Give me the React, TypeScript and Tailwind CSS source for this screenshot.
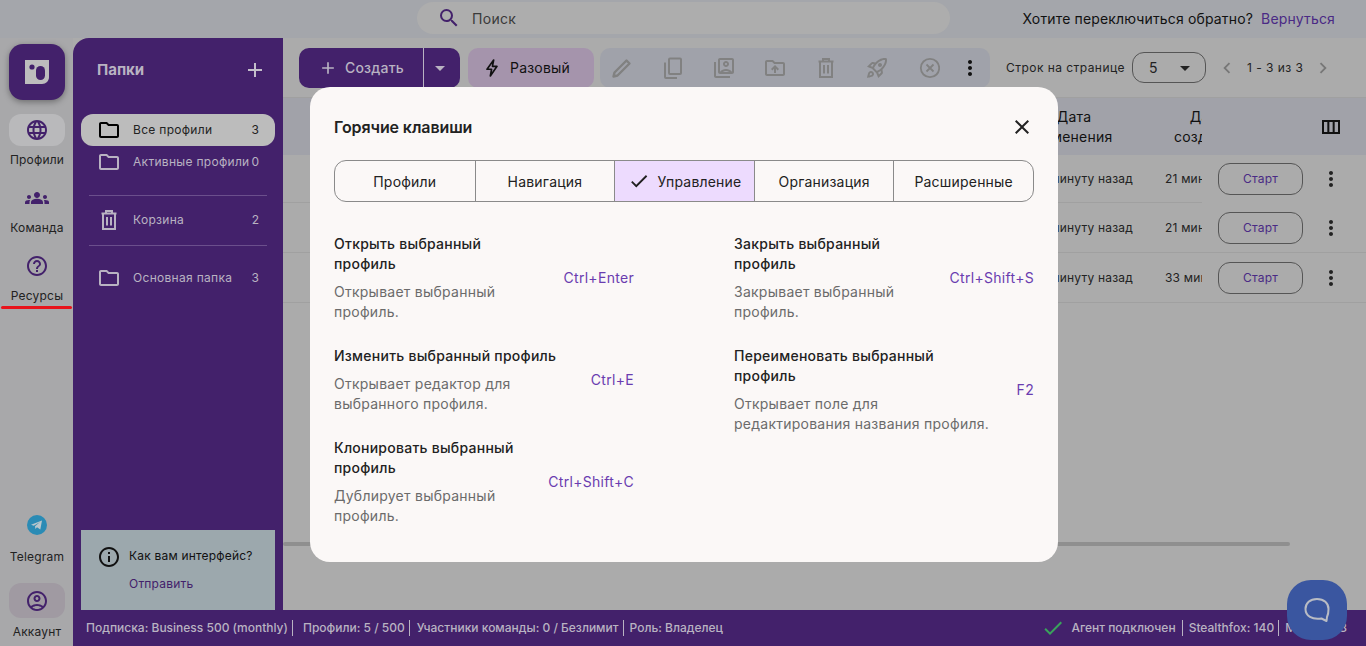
import React from 'react';
import {
  MdAdd, MdArrowDropDown, MdCheck, MdChevronLeft, MdChevronRight, MdClose, MdGroups,
  MdHelpOutline, MdInfoOutline, MdLanguage, MdMoreVert, MdOutlineAccountCircle,
  MdOutlineDriveFolderUpload, MdOutlineFolder,
  MdOutlineRocketLaunch, MdOutlineSwitchAccount, MdOutlineViewColumn, MdSearch,
} from 'react-icons/md';

const tabs = ['Профили', 'Навигация', 'Управление', 'Организация', 'Расширенные'];

const leftKeys = [
  { title: ['Открыть выбранный', 'профиль'], desc: ['Открывает выбранный', 'профиль.'], keys: 'Ctrl+Enter' },
  { title: ['Изменить выбранный профиль'], desc: ['Открывает редактор для', 'выбранного профиля.'], keys: 'Ctrl+E' },
  { title: ['Клонировать выбранный', 'профиль'], desc: ['Дублирует выбранный', 'профиль.'], keys: 'Ctrl+Shift+C' },
];

const rightKeys = [
  { title: ['Закрыть выбранный', 'профиль'], desc: ['Закрывает выбранный', 'профиль.'], keys: 'Ctrl+Shift+S' },
  { title: ['Переименовать выбранный', 'профиль'], desc: ['Открывает поле для', 'редактирования названия профиля.'], keys: 'F2' },
];

const rows = ['21 минуту назад', '21 минуту назад', '33 минуты назад'];

function TrashIcon({ size = 24 }: { size?: number }) {
  return (
    <svg width={size} height={size} viewBox="0 0 24 24" fill="none" stroke="currentColor" strokeWidth="2">
      <path d="M4.5 5.5h15M9 5.5V3h6v2.5M6 5.5V21h12V5.5M10 9v8.5M14 9v8.5" />
    </svg>
  );
}

function CopyIcon() {
  return (
    <svg width="24" height="24" viewBox="0 0 24 24" fill="none" stroke="currentColor" strokeWidth="2">
      <rect x="8" y="2.5" width="12" height="15.5" rx="1" />
      <path d="M4 6.5V21a1 1 0 0 0 1 1h11" />
    </svg>
  );
}

function PencilIcon() {
  return (
    <svg width="24" height="24" viewBox="0 0 24 24" fill="none" stroke="currentColor" strokeWidth="2.4" strokeLinejoin="round">
      <path d="M3.5 20.5 4.5 16.5 16.5 4.5 19.5 7.5 7.5 19.5Z" />
    </svg>
  );
}

function BoltIcon() {
  return (
    <svg width="20" height="20" viewBox="0 0 24 24" fill="none" stroke="currentColor" strokeWidth="2" strokeLinejoin="round">
      <path d="M14 2.5 6 13.5h5.5L10 21.5l8-11.5h-5.5Z" />
    </svg>
  );
}

function CancelIcon() {
  return (
    <svg width="24" height="24" viewBox="0 0 24 24" fill="none" stroke="currentColor" strokeWidth="1.8">
      <circle cx="14" cy="12" r="9.2" />
      <path d="M10.5 8.5l7 7M17.5 8.5l-7 7" />
    </svg>
  );
}

function Lines({ lines }: { lines: string[] }) {
  return (
    <>
      {lines.map((l) => (
        <div key={l}>{l}</div>
      ))}
    </>
  );
}

function KeyColumn({ items }: { items: typeof leftKeys }) {
  return (
    <div className="flex flex-col gap-6">
      {items.map((item) => (
        <div key={item.keys} className="flex items-center justify-between">
          <div className="flex flex-col gap-2 whitespace-nowrap text-[14px] leading-5 tracking-[0.25px]">
            <div className="font-[450] text-[#222]">
              <Lines lines={item.title} />
            </div>
            <div className="text-[#6b6b6b]">
              <Lines lines={item.desc} />
            </div>
          </div>
          <div className="pb-[2px] text-[14px] tracking-[0.3px] text-[#6a3cb0]">{item.keys}</div>
        </div>
      ))}
    </div>
  );
}

function RailItem({ label, active, children }: { label: string; active?: boolean; children: React.ReactNode }) {
  return (
    <div className="flex flex-col items-center">
      <div className={`flex h-8 w-14 items-center justify-center rounded-xl text-[24px] text-[#43216b] ${active ? 'bg-[#b9b9bb]' : ''}`}>
        {children}
      </div>
      <div className="mt-[6px] pl-px text-[12px] leading-4 tracking-[0.2px] text-[#222]">{label}</div>
    </div>
  );
}

function FolderRow({ label, count, active, trash }: { label: string; count: string; active?: boolean; trash?: boolean }) {
  return (
    <div className={`mx-2 flex h-8 items-center rounded-xl pl-4 pr-4 ${active ? 'bg-[#bcbcbc] text-[#222]' : 'text-[#b9b3c2]'}`}>
      {trash ? <TrashIcon /> : <MdOutlineFolder className={`text-[24px] ${active ? 'text-black' : ''}`} />}
      <span className="ml-3 flex-1 whitespace-nowrap text-[12px] tracking-[0.3px]">{label}</span>
      <span className="text-[12px]">{count}</span>
    </div>
  );
}

function Divider() {
  return <div className="mx-4 h-px bg-[#6b4f8c]" />;
}

export default function App() {
  return (
    <div className="relative flex h-[646px] w-[1366px] flex-col overflow-hidden bg-[#ababab] font-['Inter',sans-serif]">
      {/* top bar */}
      <div className="flex h-[38px] shrink-0 items-center bg-[#a4a6ab] pb-[2px] pl-[417px] pr-[31px]">
        <div className="flex h-8 w-[533px] items-center rounded-2xl bg-[#adadad] pl-[20px]">
          <MdSearch className="text-[24px] text-[#43216b]" />
          <span className="ml-[11px] text-[14px] tracking-[0.3px] text-[#3a3a3a]">Поиск</span>
        </div>
        <div className="ml-auto whitespace-nowrap text-[14px] tracking-[0.15px] text-[#111]">
          Хотите переключиться обратно? <span className="ml-1 text-[#4a2a85]">Вернуться</span>
        </div>
      </div>

      <div className="flex min-h-0 flex-1">
        {/* left rail */}
        <div className="flex w-[73px] shrink-0 flex-col items-center bg-[#a8a8aa]">
          <div className="mt-[6px] flex h-14 w-14 items-center justify-center rounded-[14px] bg-[#43216b] shadow-[0_2px_6px_rgba(0,0,0,0.35)]">
            <svg width="24" height="24" viewBox="0 0 24 24">
              <path d="M0 0H24V17C24 21 21 24 17 24H0Z" fill="#bdbdbd" />
              <circle cx="7" cy="7" r="2.6" fill="#43216b" />
              <rect x="11" y="6" width="9" height="14" rx="4.5" fill="#43216b" />
            </svg>
          </div>
          <div className="mt-[14px] flex flex-col gap-[14px]">
            <RailItem label="Профили" active><MdLanguage /></RailItem>
            <RailItem label="Команда"><MdGroups /></RailItem>
            <RailItem label="Ресурсы"><MdHelpOutline /></RailItem>
          </div>
          <div className="mt-[2px] h-[3px] w-[71px] rounded-full bg-[#e8141c]" />
          <div className="mt-auto flex flex-col items-center">
            <div className="flex flex-col items-center">
              <div className="flex h-8 w-14 items-center justify-center">
                <svg width="20" height="20" viewBox="0 0 20 20">
                  <circle cx="10" cy="10" r="10" fill="#2a8bb5" />
                  <path d="M4 9.8 15 5.6 13.3 14.6 10 12.3 8.4 13.9 8 11.2 13 7 6.8 10.7Z" fill="#b9c6cc" />
                </svg>
              </div>
              <div className="mt-2 pl-px text-[12px] leading-4 tracking-[0.2px] text-[#222]">Telegram</div>
            </div>
            <div className="mt-[18px]">
              <div className="flex h-[35px] w-14 items-center justify-center rounded-xl bg-[#a09aa2] text-[24px] text-[#43216b]">
                <MdOutlineAccountCircle />
              </div>
              <div className="mt-[6px] pb-[6px] pl-px text-center text-[12px] leading-4 tracking-[0.2px] text-[#222]">Аккаунт</div>
            </div>
          </div>
        </div>

        <div className="flex min-w-0 flex-1 flex-col">
          <div className="flex min-h-0 flex-1">
            {/* folders */}
            <div className="flex w-[210px] shrink-0 flex-col rounded-tl-2xl bg-[#43216b]">
              <div className="flex h-[76px] items-center justify-between pb-3 pl-6 pr-4">
                <span className="text-[15px] font-bold text-[#b9b3c2]">Папки</span>
                <MdAdd className="text-[24px] text-[#c4bfcb]" />
              </div>
              <FolderRow label="Все профили" count="3" active />
              <FolderRow label="Активные профили" count="0" />
              <div className="mt-[17px]">
                <Divider />
              </div>
              <div className="mt-2">
                <FolderRow label="Корзина" count="2" trash />
              </div>
              <div className="mt-[9px]">
                <Divider />
              </div>
              <div className="mt-4">
                <FolderRow label="Основная папка" count="3" />
              </div>
              <div className="mx-2 mt-auto h-20 bg-[#9ca8ad] pl-4 pt-[15px]">
                <div className="flex items-center gap-2">
                  <MdInfoOutline className="text-[24px] text-[#111]" />
                  <span className="pb-[2px] text-[12px] tracking-[0.2px] text-[#111]">Как вам интерфейс?</span>
                </div>
                <div className="ml-8 mt-[6px] text-[12px] tracking-[0.2px] text-[#43216b]">Отправить</div>
              </div>
            </div>

            {/* main */}
            <div className="relative flex min-w-0 flex-1 flex-col">
              <div className="flex h-[60px] shrink-0 items-center border-b border-[#a0a0a0] pl-4">
                <div className="flex h-10 w-[161px] items-center rounded-[10px] bg-[#43216b] text-[#b9b3c2]">
                  <div className="flex w-[125px] items-center gap-[7px] self-stretch border-r border-[#b9b3c2] pl-[19px]">
                    <MdAdd className="text-[20px]" />
                    <span className="text-[14px] font-medium tracking-[0.2px]">Создать</span>
                  </div>
                  <MdArrowDropDown className="ml-1 text-[24px]" />
                </div>
                <div className="ml-2 flex h-10 w-[126px] items-center gap-2 rounded-[10px] bg-[#a594ac] pl-[14px] text-[#111]">
                  <BoltIcon />
                  <span className="text-[14px] tracking-[0.2px]">Разовый</span>
                </div>
                <div className="ml-[6px] flex h-10 w-[390px] items-center gap-[27px] rounded-[10px] bg-[#a0a2aa] pl-[10px] text-[24px] text-[#818181]">
                  <PencilIcon />
                  <CopyIcon />
                  <MdOutlineSwitchAccount />
                  <MdOutlineDriveFolderUpload />
                  <TrashIcon />
                  <MdOutlineRocketLaunch />
                  <CancelIcon />
                  <MdMoreVert className="-ml-[9px] text-[#111]" />
                </div>
                <span className="ml-4 whitespace-nowrap text-[12px] tracking-[0.45px] text-[#222]">Строк на странице</span>
                <div className="ml-[7px] flex h-[31px] w-[74px] items-center justify-between rounded-xl border border-[#555] pl-4 pr-2 text-[14px] text-[#222]">
                  5
                  <MdArrowDropDown className="text-[24px]" />
                </div>
                <MdChevronLeft className="ml-[10px] text-[22px] text-[#777]" />
                <span className="ml-[9px] whitespace-nowrap text-[12px] tracking-[0.45px] text-[#222]">1 - 3 из 3</span>
                <MdChevronRight className="ml-[9px] text-[22px] text-[#777]" />
              </div>

              <div className="flex h-[57px] shrink-0 items-center justify-end bg-[#a1a2a9] text-[14px] leading-5 tracking-[0.2px] text-[#111]">
                <div className="w-[120px] text-center">Дата<br />изменения</div>
                <div className="ml-[31px] h-10 w-[37px] overflow-hidden">
                  <div className="w-[84px] text-center">Дата<br />создания</div>
                </div>
                <div className="w-[164px] pr-[23px]">
                  <MdOutlineViewColumn className="ml-auto text-[24px] text-[#111]" />
                </div>
              </div>

              {rows.map((created, i) => (
                <div key={i} className={`flex shrink-0 items-center justify-end border-b ${i === 2 ? 'h-[50px]' : 'h-[49px]'} ${i === 0 ? 'border-transparent' : 'border-[#a0a0a0]'}`}>
                  <div className={`flex h-full flex-1 items-center justify-end text-[12px] tracking-[0.2px] text-[#222] ${i === 0 ? 'border-b border-[#a0a0a0]' : ''}`}>
                    <span className="whitespace-nowrap">1 минуту назад</span>
                    <div className="ml-[32px] w-[37px] overflow-hidden whitespace-nowrap">{created}</div>
                  </div>
                  <div className="ml-4 flex h-8 w-[85px] items-center justify-center rounded-xl border border-[#555] text-[12px] tracking-[0.2px] text-[#4a2a85]">Старт</div>
                  <MdMoreVert className="ml-4 mr-[23px] text-[24px] text-[#222]" />
                </div>
              ))}

              <div className="mb-[64px] mr-[76px] mt-auto h-1 rounded-full bg-[#8f8f8f]" />
            </div>
          </div>

          {/* status bar */}
          <div className="flex h-9 shrink-0 items-center bg-[#43216b] pl-[13px] pr-[19px] text-[12px] font-medium text-[#b9b3c2]">
            <span>Подписка: Business 500 (monthly)</span>
            <span className="ml-1 h-4 w-px bg-[#b9b3c2]" />
            <span className="ml-[10px]">Профили: 5 / 500</span>
            <span className="ml-1 h-4 w-px bg-[#b9b3c2]" />
            <span className="ml-[7px]">Участники команды: 0 / Безлимит</span>
            <span className="ml-1 h-4 w-px bg-[#b9b3c2]" />
            <span className="ml-[6px]">Роль: Владелец</span>
            <MdCheck className="ml-auto text-[24px] text-[#3aa35c]" />
            <span className="ml-[6px]">Агент подключен</span>
            <span className="ml-[6px] h-4 w-px bg-[#b9b3c2]" />
            <span className="ml-[6px]">Stealthfox: 140</span>
            <span className="ml-[4px] h-4 w-px bg-[#b9b3c2]" />
            <span className="ml-[6px]">Mimic: 143</span>
          </div>
        </div>
      </div>

      {/* hotkeys dialog */}
      <div className="absolute inset-0 flex items-center justify-center pl-[2px] pt-[3px]">
        <div className="flex h-[475px] w-[748px] flex-col rounded-[20px] bg-[#fbf8f7] px-6">
          <div className="flex h-[73px] shrink-0 items-center justify-between pt-[6px]">
            <span className="text-[16px] font-semibold tracking-[-0.1px] text-[#222]">Горячие клавиши</span>
            <MdClose className="text-[24px] text-[#222]" />
          </div>
          <div className="grid h-[42px] shrink-0 grid-cols-5 overflow-hidden rounded-xl border border-[#8a8a8a] text-[14px] tracking-[0.2px] text-[#222]">
            {tabs.map((t, i) => (
              <div key={t} className={`flex items-center justify-center ${i > 0 ? 'border-l border-[#8a8a8a]' : ''} ${i === 2 ? 'gap-2 bg-[#eddbfe]' : ''}`}>
                {i === 2 && <MdCheck className="text-[22px]" />}
                {t}
              </div>
            ))}
          </div>
          <div className="mt-8 grid grid-cols-2 items-start gap-x-[100px]">
            <KeyColumn items={leftKeys} />
            <KeyColumn items={rightKeys} />
          </div>
        </div>
      </div>

      {/* chat button */}
      <div className="absolute left-[1287px] top-[580px] flex h-[60px] w-[60px] items-center justify-center rounded-[24px] bg-[#3a56a0]">
        <svg width="28" height="28" viewBox="0 0 28 28" fill="none" stroke="#b9bcc4" strokeWidth="2">
          <path d="M14 3C21 3 25.5 7 25.5 13 25.5 16 25 19 24 21L23.5 25 18.5 22.5C9 24 2.5 20 2.5 13 2.5 7 7 3 14 3Z" strokeLinejoin="round" />
        </svg>
      </div>
    </div>
  );
}
